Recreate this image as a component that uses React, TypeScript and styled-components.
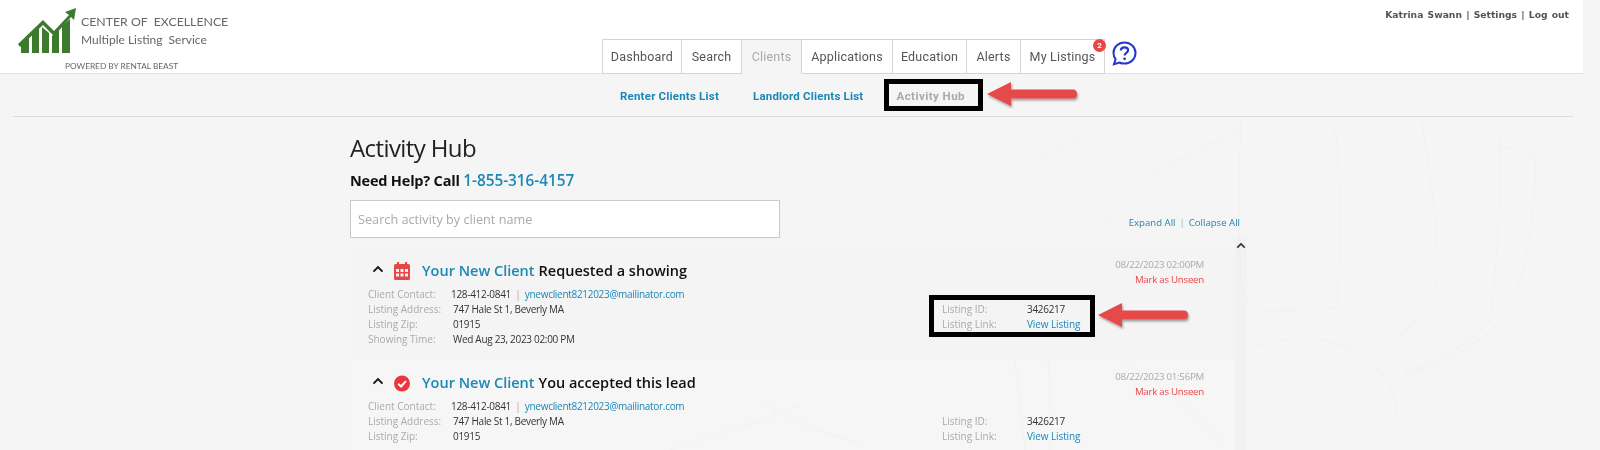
import styled, { createGlobalStyle } from 'styled-components'

const GlobalStyle = createGlobalStyle`
  html, body {
    margin: 0;
    height: 450px;
    overflow: hidden;
    background: #f5f5f5;
  }
`

const Page = styled.div`
  position: relative;
  width: 1600px;
  height: 450px;
  overflow: hidden;
  font-family: 'Open Sans', sans-serif;
  color: #222;
`

const Watermark = styled.svg`
  position: absolute;
  left: 0;
  top: 0;
  pointer-events: none;
  mix-blend-mode: multiply;
`

const Header = styled.header`
  position: relative;
  width: 1583px;
  height: 74px;
  box-sizing: border-box;
  background: #fff;
  border-bottom: 1px solid #e2e2e2;
  display: flex;
  justify-content: space-between;
`

const Brand = styled.div`
  display: grid;
  grid-template-columns: 58px auto;
  column-gap: 5px;
  padding: 8px 0 0 18px;
`

const BrandText = styled.div`
  font-family: Lato, sans-serif;
  color: #666;
  padding-top: 5px;
`

const BrandLine = styled.div<{ $size: number }>`
  font-size: ${p => p.$size}px;
  line-height: 18px;
  white-space: pre;
`

const Powered = styled.div`
  grid-column: 1 / span 2;
  margin: 4px 0 0 47px;
  font-family: Lato, sans-serif;
  font-size: 8.3px;
  line-height: 12px;
  color: #666;
`

const Tabs = styled.nav`
  position: absolute;
  left: 602px;
  bottom: -1px;
  display: flex;
  align-items: flex-end;
`

const Tab = styled.a<{ $w: number; $active?: boolean }>`
  position: relative;
  box-sizing: border-box;
  width: ${p => p.$w}px;
  height: 35px;
  display: flex;
  align-items: center;
  justify-content: center;
  font-family: Roboto, sans-serif;
  font-size: 12.5px;
  letter-spacing: 0.2px;
  color: ${p => (p.$active ? '#a9a9a9' : '#555')};
  background: ${p => (p.$active ? '#f5f5f5' : '#fff')};
  border: 1px solid #d4d4d4;
  border-left-width: 0;
  border-bottom-color: ${p => (p.$active ? '#f5f5f5' : '#d4d4d4')};
  &:first-child {
    border-left-width: 1px;
  }
`

const Badge = styled.span`
  position: absolute;
  top: -1px;
  right: -2px;
  width: 13px;
  height: 13px;
  border-radius: 50%;
  background: #e8474a;
  color: #fff;
  font-size: 8px;
  font-weight: 700;
  line-height: 13px;
  text-align: center;
  letter-spacing: 0;
`

const HelpIcon = styled.svg`
  position: absolute;
  left: 1112px;
  top: 41px;
`

const UserLinks = styled.div`
  position: absolute;
  right: 14px;
  top: 8px;
  font-family: 'DejaVu Sans', sans-serif;
  font-size: 9.2px;
  font-weight: 700;
  line-height: 13px;
  color: #555;
  word-spacing: 1px;
`

const SubNav = styled.div`
  position: relative;
  height: 43px;
  margin: 0 27px 0 13px;
  box-sizing: border-box;
  border-bottom: 1px solid #dcdcdc;
  display: flex;
  padding: 14px 0 0 607px;
`

const SubLink = styled.a<{ $active?: boolean; $gap: number }>`
  font-family: Roboto, sans-serif;
  font-size: 11.5px;
  font-weight: 700;
  line-height: 16px;
  letter-spacing: ${p => (p.$active ? '0.45px' : '0.2px')};
  margin-right: ${p => p.$gap}px;
  white-space: nowrap;
  color: ${p => (p.$active ? '#a9a9a9' : '#1b87b5')};
`

const Main = styled.main`
  position: relative;
  width: 897px;
  margin-left: 350px;
`

const Title = styled.h1`
  margin: 14px 0 0;
  font-size: 24px;
  font-weight: 400;
  line-height: 33px;
  letter-spacing: -0.6px;
  color: #222;
`

const HelpLine = styled.div`
  margin-top: 6px;
  font-size: 14.5px;
  font-weight: 700;
  line-height: 20px;
  color: #111;
  letter-spacing: -0.2px;
`

const Phone = styled.a`
  color: #1b87b5;
  font-weight: 600;
  font-size: 15.3px;
  letter-spacing: 0;
`

const SearchRow = styled.div`
  margin-top: 9px;
  display: flex;
  justify-content: space-between;
  align-items: flex-end;
  padding-right: 7px;
`

const SearchBox = styled.div`
  box-sizing: border-box;
  width: 430px;
  height: 38px;
  background: #fff;
  border: 1px solid #c9c9c9;
  padding-left: 7px;
  font-size: 12.7px;
  line-height: 36px;
  color: #aaa;
`

const ExpandLinks = styled.div`
  font-size: 9.6px;
  line-height: 14px;
  color: #1b87b5;
  margin-bottom: 8px;
`

const Divider = styled.span`
  color: #aaa;
  margin: 0 4px;
`

const Feed = styled.div`
  position: relative;
  margin-top: 10px;
`

const ScrollTrack = styled.div`
  position: absolute;
  right: 0;
  top: -10px;
  bottom: -100px;
  width: 12px;
  background: #f2f2f2;
  display: flex;
  justify-content: center;
  padding-top: 4px;
  box-sizing: border-box;
`

const Card = styled.article<{ $shade?: boolean }>`
  box-sizing: border-box;
  height: 112px;
  margin-right: 12px;
  padding: 12px 31px 0 18px;
  background: ${p => (p.$shade ? '#f4f4f4' : '#f6f6f6')};
  display: grid;
  grid-template-columns: 1fr auto;
  grid-template-rows: 22px auto;
`

const CardHead = styled.div`
  display: flex;
  align-items: center;
  height: 22px;
`

const ToggleIcon = styled.svg`
  margin: -3px 0 0 4px;
`

const KindIcon = styled.svg`
  margin: 0 12px 0 10px;
`

const ClientName = styled.a`
  font-size: 14.5px;
  font-weight: 600;
  line-height: 20px;
  color: #1b87b5;
  margin-right: 4px;
`

const ActionText = styled.span`
  font-size: 14.5px;
  font-weight: 600;
  line-height: 20px;
  color: #111;
`

const Stamp = styled.div`
  text-align: right;
  font-size: 9.7px;
  letter-spacing: -0.25px;
  line-height: 15px;
  color: #aaa;
  margin-top: -3px;
`

const Unseen = styled.a`
  display: block;
  color: #e8474a;
`

const Details = styled.div`
  grid-column: 1 / span 2;
  display: flex;
  justify-content: space-between;
  margin-top: 5px;
`

const DetailGroup = styled.div<{ $offset?: number; $width?: number }>`
  margin-top: ${p => p.$offset ?? 0}px;
  width: ${p => (p.$width ? `${p.$width}px` : 'auto')};
`

const Row = styled.div<{ $col: number }>`
  display: grid;
  grid-template-columns: ${p => p.$col}px auto;
  font-size: 10px;
  line-height: 15px;
  white-space: nowrap;
`

const Label = styled.span`
  color: #aaa;
`

const Value = styled.span<{ $nudge?: boolean }>`
  color: #333;
  letter-spacing: -0.3px;
  margin-left: ${p => (p.$nudge ? '-2px' : '0')};
`

const ContactDivider = styled.span`
  color: #aaa;
  margin: 0 2px;
`

const MailLink = styled.a`
  color: #1b87b5;
  letter-spacing: -0.3px;
`

const LinkValue = styled.a`
  color: #1b87b5;
  letter-spacing: -0.1px;
`

const CallBox = styled.div<{ $l: number; $t: number; $w: number; $h: number }>`
  position: absolute;
  left: ${p => p.$l}px;
  top: ${p => p.$t}px;
  width: ${p => p.$w}px;
  height: ${p => p.$h}px;
  box-sizing: border-box;
  border: 5px solid #000;
`

const CallArrow = styled.svg<{ $l: number; $t: number }>`
  position: absolute;
  left: ${p => p.$l}px;
  top: ${p => p.$t}px;
  overflow: visible;
`

function Arrow({ left, top }: { left: number; top: number }) {
  return (
    <CallArrow $l={left} $t={top} width="92" height="26" viewBox="0 0 92 26">
      <defs>
        <filter id="arrowShade" x="-10%" y="-20%" width="125%" height="160%">
          <feDropShadow dx="1" dy="2" stdDeviation="1.2" floodColor="#000" floodOpacity="0.35" />
        </filter>
      </defs>
      <path
        d="M1 13 L25 1 L25 8.500 L87 8.500 Q91 8.500 91 13 Q91 17.500 87 17.500 L25 17.500 L25 25 Z"
        fill="#e5484a"
        filter="url(#arrowShade)"
      />
    </CallArrow>
  )
}

function Logo() {
  return (
    <svg width="58" height="46" viewBox="0 0 58 46">
      <g fill="#3c7a2d">
        <path d="M3 45V36L11 28V45Z" />
        <path d="M14 45V25L21 18V45Z" />
        <path d="M24 45V19L31 25V45Z" />
        <path d="M34 45V28L41 21V45Z" />
        <path d="M44 45V18L52 11V45Z" />
        <path d="M0 36L25 12L36 23L51 7L47 4L58 0L56 12L53 9L36 28L25 17L2 39Z" />
      </g>
    </svg>
  )
}

function Chevron({ size = 12 }: { size?: number }) {
  return (
    <ToggleIcon width={size} height={size * 0.67} viewBox="0 0 12 8">
      <path d="M1.5 6.5L6 2L10.5 6.5" fill="none" stroke="#111" strokeWidth="1.8" />
    </ToggleIcon>
  )
}

function CalendarIcon() {
  return (
    <KindIcon width="16" height="18" viewBox="0 0 16 18">
      <path
        fillRule="evenodd"
        fill="#e8474a"
        d="M3 0h2v2h6V0h2v2h1.5A1.5 1.5 0 0 1 16 3.5v13a1.5 1.5 0 0 1-1.5 1.5h-13A1.5 1.5 0 0 1 0 16.500v-13A1.500 1.500 0 0 1 1.500 2H3ZM2 7v3h3V7Zm4.500 0v3h3V7ZM11 7v3h3V7ZM2 11.500v3h3v-3Zm4.500 0v3h3v-3Zm4.500 0v3h3v-3Z"
      />
    </KindIcon>
  )
}

function CheckIcon() {
  return (
    <KindIcon width="16" height="17" viewBox="0 0 17 17">
      <circle cx="8.500" cy="8.500" r="8.500" fill="#e8373f" />
      <path d="M4.500 8.700L7.500 11.600L12.700 6" fill="none" stroke="#fff" strokeWidth="2.200" />
    </KindIcon>
  )
}

type Activity = {
  shade?: boolean
  icon: 'calendar' | 'check'
  action: string
  stamp: string
  showing?: string
}

const activities: Activity[] = [
  {
    shade: true,
    icon: 'calendar',
    action: 'Requested a showing',
    stamp: '08/22/2023 02:00PM',
    showing: 'Wed Aug 23, 2023 02:00 PM',
  },
  {
    icon: 'check',
    action: 'You accepted this lead',
    stamp: '08/22/2023 01:56PM',
  },
]

function ActivityCard({ item }: { item: Activity }) {
  return (
    <Card $shade={item.shade}>
      <CardHead>
        <Chevron />
        {item.icon === 'calendar' ? <CalendarIcon /> : <CheckIcon />}
        <ClientName>Your New Client</ClientName>
        <ActionText>{item.action}</ActionText>
      </CardHead>
      <Stamp>
        {item.stamp}
        <Unseen>Mark as Unseen</Unseen>
      </Stamp>
      <Details>
        <DetailGroup>
          <Row $col={85}>
            <Label>Client Contact:</Label>
            <Value $nudge>
              128-412-0841 <ContactDivider>|</ContactDivider> <MailLink>ynewclient8212023@mailinator.com</MailLink>
            </Value>
          </Row>
          <Row $col={85}>
            <Label>Listing Address:</Label>
            <Value>747 Hale St 1, Beverly MA</Value>
          </Row>
          <Row $col={85}>
            <Label>Listing Zip:</Label>
            <Value>01915</Value>
          </Row>
          {item.showing && (
            <Row $col={85}>
              <Label>Showing Time:</Label>
              <Value>{item.showing}</Value>
            </Row>
          )}
        </DetailGroup>
        <DetailGroup $offset={15} $width={262}>
          <Row $col={85}>
            <Label>Listing ID:</Label>
            <Value>3426217</Value>
          </Row>
          <Row $col={85}>
            <Label>Listing Link:</Label>
            <LinkValue>View Listing</LinkValue>
          </Row>
        </DetailGroup>
      </Details>
    </Card>
  )
}

function App() {
  return (
    <Page>
      <GlobalStyle />
      <Header>
        <Brand>
          <Logo />
          <BrandText>
            <BrandLine $size={12.3}>CENTER OF  EXCELLENCE</BrandLine>
            <BrandLine $size={12}>Multiple Listing  Service</BrandLine>
          </BrandText>
          <Powered>POWERED BY RENTAL BEAST</Powered>
        </Brand>
        <Tabs>
          <Tab $w={80}>Dashboard</Tab>
          <Tab $w={60}>Search</Tab>
          <Tab $w={60} $active>Clients</Tab>
          <Tab $w={91}>Applications</Tab>
          <Tab $w={74}>Education</Tab>
          <Tab $w={54}>Alerts</Tab>
          <Tab $w={84}>
            My Listings
            <Badge>2</Badge>
          </Tab>
        </Tabs>
        <HelpIcon width="25" height="25" viewBox="0 0 25 25">
          <path
            d="M12.500 1.500C6.400 1.500 1.500 6.200 1.500 12C1.500 14.300 2.300 16.400 3.600 18.100L2 23.200L7.400 21.500C9 22.300 10.700 22.600 12.500 22.600C18.600 22.600 23.500 17.800 23.500 12C23.500 6.200 18.600 1.500 12.500 1.500Z"
            fill="none"
            stroke="#2438c8"
            strokeWidth="2"
          />
          <path d="M8.800 9.500C9 7.400 10.500 6.300 12.500 6.300C14.600 6.300 16.100 7.500 16.100 9.300C16.100 11.900 12.600 11.800 12.600 14.500" fill="none" stroke="#2438c8" strokeWidth="2.200" />
          <circle cx="12.600" cy="17.800" r="1.400" fill="#2438c8" />
        </HelpIcon>
        <UserLinks>Katrina Swann | Settings | Log out</UserLinks>
      </Header>
      <SubNav>
        <SubLink $gap={34}>Renter Clients List</SubLink>
        <SubLink $gap={33}>Landlord Clients List</SubLink>
        <SubLink $gap={0} $active>Activity Hub</SubLink>
      </SubNav>
      <Main>
        <Title>Activity Hub</Title>
        <HelpLine>
          Need Help? Call <Phone>1-855-316-4157</Phone>
        </HelpLine>
        <SearchRow>
          <SearchBox>Search activity by client name</SearchBox>
          <ExpandLinks>
            Expand All<Divider>|</Divider>Collapse All
          </ExpandLinks>
        </SearchRow>
        <Feed>
          <ScrollTrack>
            <svg width="10" height="7" viewBox="0 0 12 8">
              <path d="M1.500 6.500L6 2L10.500 6.500" fill="none" stroke="#333" strokeWidth="2" />
            </svg>
          </ScrollTrack>
          {activities.map(item => (
            <ActivityCard key={item.stamp} item={item} />
          ))}
        </Feed>
      </Main>
      <Watermark width="1600" height="450" viewBox="0 0 1600 450" fill="none" stroke="#fcfcfc" strokeWidth="1.500">
        <path d="M1241 120C1238 180 1238 250 1242 290C1250 310 1260 312 1280 310C1300 310 1320 310 1337 307C1340 250 1340 190 1337 140C1335 125 1325 120 1310 118" />
        <path d="M1421 118C1432 180 1440 240 1437 287C1420 320 1400 340 1375 350" />
        <path d="M1498 118C1502 180 1498 260 1490 320C1470 345 1440 360 1405 372" />
        <path d="M1498 147C1515 148 1530 152 1536 157C1535 210 1528 260 1513 307C1490 340 1450 360 1402 377" />
        <path d="M1249 350C1270 340 1300 336 1326 340C1355 350 1380 368 1391 387C1396 400 1397 412 1395 420C1390 432 1378 442 1364 447" />
        <path d="M1092 243C1105 222 1118 203 1134 187C1165 165 1205 145 1241 130" />
        <path d="M1015 360C1018 390 1022 420 1025 450" />
        <path d="M1048 360C1050 390 1052 420 1050 450" />
        <path d="M1120 360C1160 380 1200 420 1225 445" />
        <path d="M670 450C720 432 770 420 800 405" />
        <path d="M1040 160L1092 130M760 400C790 420 820 430 860 445" />
      </Watermark>
      <CallBox $l={884} $t={79} $w={99} $h={32} />
      <Arrow left={986} top={81} />
      <CallBox $l={929} $t={295} $w={166} $h={42} />
      <Arrow left={1097} top={302} />
    </Page>
  )
}

export default App
